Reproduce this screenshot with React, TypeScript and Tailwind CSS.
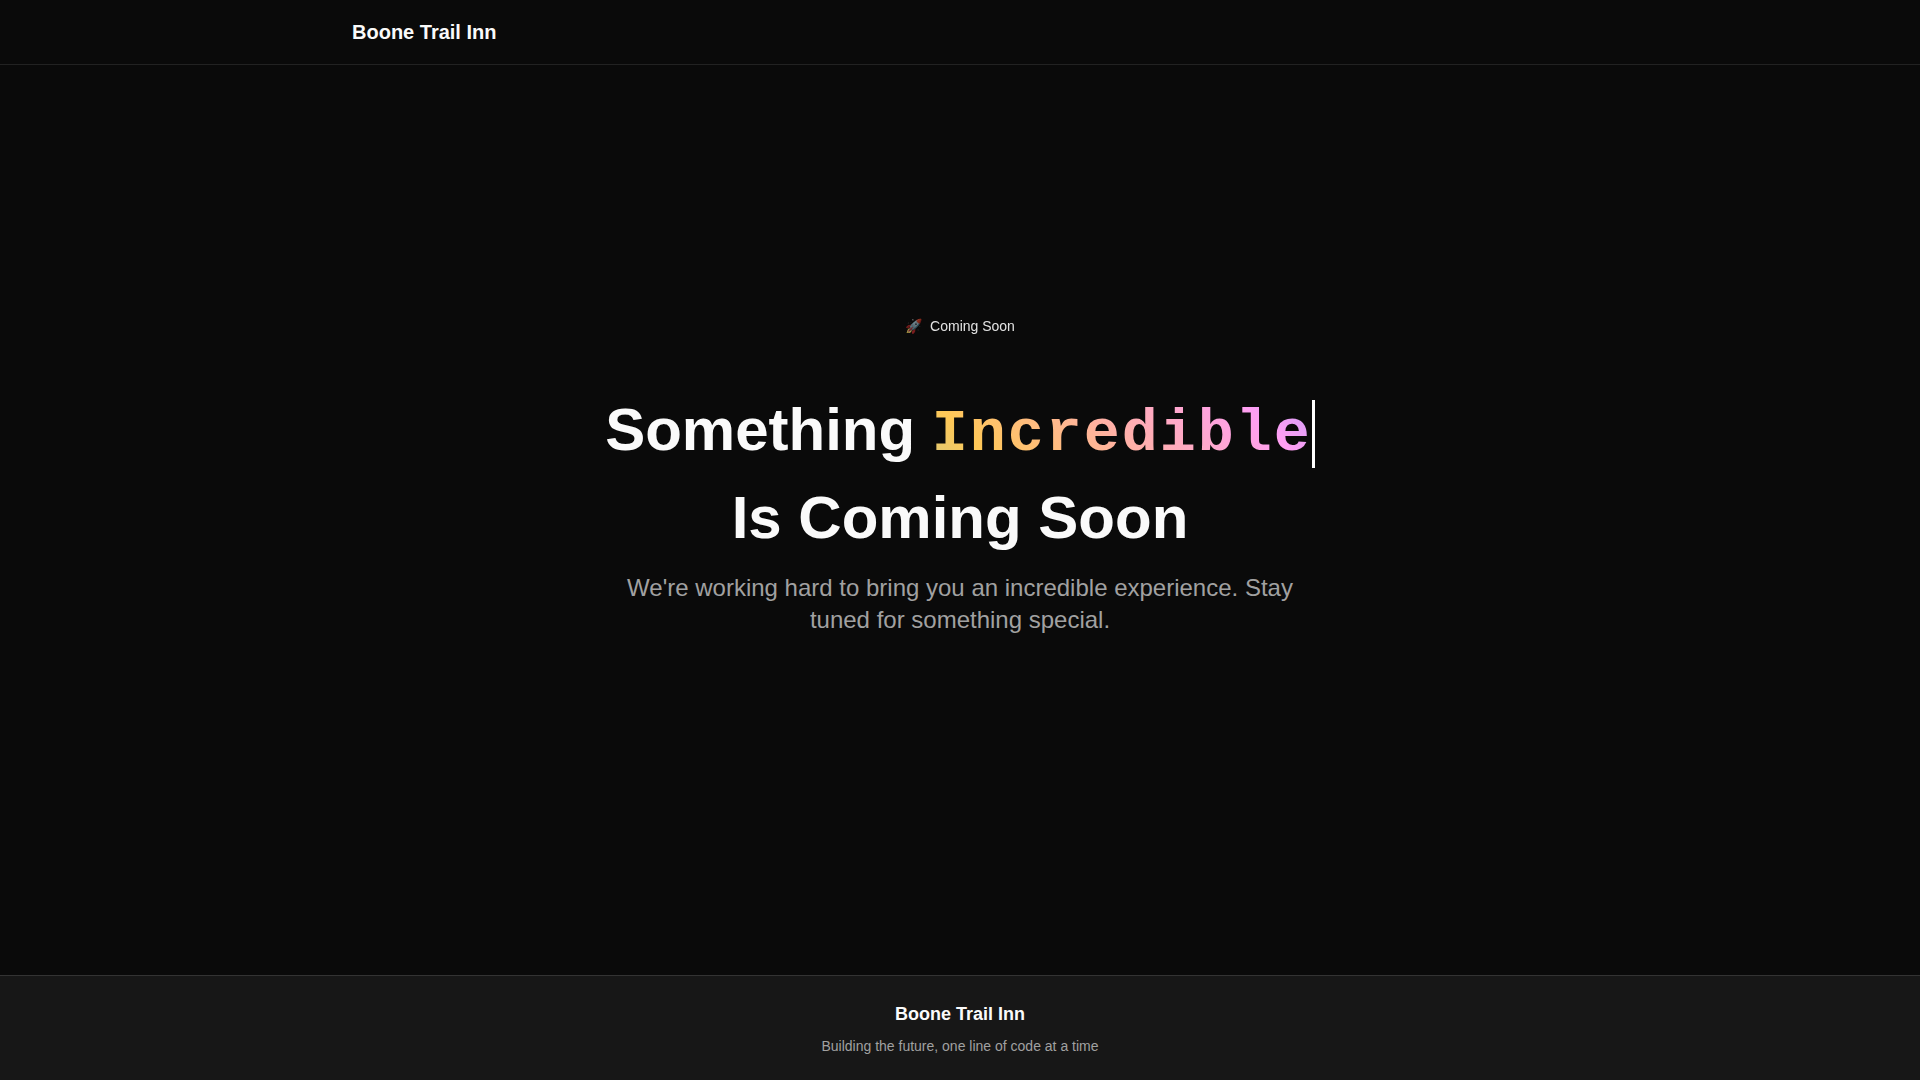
export default function App() {
  return (
    <div className="flex min-h-screen flex-col bg-[#0a0a0a] font-['Liberation_Sans',Arial,sans-serif] text-neutral-50">
      {/* Header */}
      <header className="border-b border-[#222222]">
        <div className="mx-auto flex h-16 max-w-7xl items-center px-8">
          <a href="/" className="text-xl font-bold">
            Boone Trail Inn
          </a>
        </div>
      </header>

      {/* Hero */}
      <main className="flex flex-1 flex-col items-center justify-center px-4 pb-24 text-center">
        <div className="mb-11 flex items-center gap-2 px-4 py-2 text-sm">
          <span className="opacity-60">🚀</span>
          <span className="opacity-90">Coming Soon</span>
        </div>

        <h1 className="mb-3 text-6xl leading-[84px] font-bold">
          <span className="block">
            Something{" "}
            <span className="border-r-3 border-white bg-[linear-gradient(45deg,#dcca78_0%,#ffc857_15%,#ffb0a8_50%,#ff9ff3_84%,#cc9ff8_100%)] bg-clip-text font-['Liberation_Mono',monospace] tracking-[2px] text-transparent">
              Incredible
            </span>
          </span>
          <span className="block">Is Coming Soon</span>
        </h1>

        <p className="max-w-2xl text-2xl text-neutral-400">
          We're working hard to bring you an incredible experience. Stay tuned for something special.
        </p>
      </main>

      {/* Footer */}
      <footer className="border-t border-[#333333] bg-[#171717] px-4 py-6 text-center">
        <h2 className="mb-2 text-lg font-bold">Boone Trail Inn</h2>
        <p className="text-sm text-neutral-400">Building the future, one line of code at a time</p>
      </footer>
    </div>
  );
}
